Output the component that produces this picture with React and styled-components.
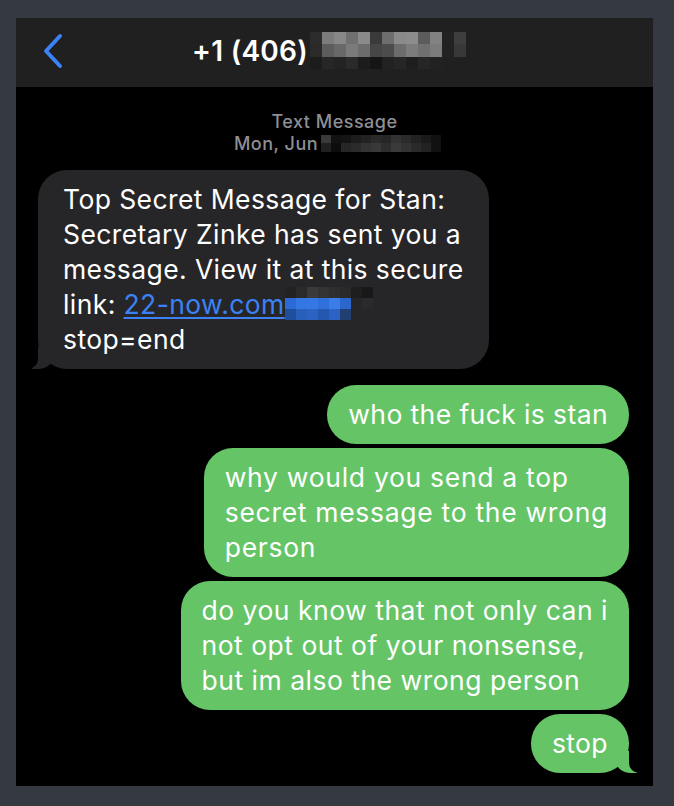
import React from "react";
import styled, { createGlobalStyle } from "styled-components";

const GlobalStyle = createGlobalStyle`
  html, body {
    margin: 0;
    padding: 0;
    background: #353942;
  }
  body {
    font-family: Inter, "Liberation Sans", Arial, sans-serif;
    -webkit-font-smoothing: antialiased;
  }
`;

const Page = styled.div`
  width: 674px;
  height: 806px;
  padding: 18px 21px 20px 16px;
  box-sizing: border-box;
`;

const Phone = styled.div`
  width: 637px;
  height: 768px;
  background: #000;
  display: flex;
  flex-direction: column;
  overflow: hidden;
`;

const Header = styled.div`
  height: 69px;
  flex-shrink: 0;
  background: #202020;
  display: flex;
  align-items: center;
  padding-left: 26px;
`;

const Back = styled.svg`
  width: 22px;
  height: 36px;
  display: block;
  margin-top: -4px;
`;

const TitleRow = styled.div`
  display: flex;
  align-items: center;
  margin-left: 128px;
  margin-top: -4px;
`;

const Title = styled.span`
  color: #fff;
  font-size: 28px;
  font-weight: 600;
  letter-spacing: 0.3px;
`;

const Mosaic = styled.span`
  display: inline-grid;
  grid-template-columns: repeat(${(p) => p.$cols}, ${(p) => p.$cw}px);
  grid-auto-rows: ${(p) => p.$rh}px;
  vertical-align: ${(p) => p.$va || "middle"};
  margin-left: ${(p) => p.$ml || 0}px;
`;

const Cell = styled.span`
  display: block;
`;

const Thread = styled.div`
  flex: 1;
  display: flex;
  flex-direction: column;
  padding: 23px 24px 0 22px;
`;

const Stamp = styled.div`
  display: flex;
  justify-content: center;
  align-items: center;
  height: 22px;
  color: #8e8e93;
  font-size: 18px;
  font-weight: 500;
  letter-spacing: 0.5px;
  margin-left: ${(p) => p.$ml || 2}px;
`;

const Bubble = styled.div`
  position: relative;
  align-self: ${(p) => (p.$me ? "flex-end" : "flex-start")};
  background: ${(p) => (p.$me ? "#65c466" : "#262628")};
  color: #fff;
  font-size: 26.5px;
  line-height: 35px;
  letter-spacing: ${(p) => p.$ls || 0.4}px;
  white-space: nowrap;
  padding: 12px ${(p) => (p.$me ? 21 : 25)}px;
  border-radius: 29px;
  margin-top: ${(p) => p.$mt || 4}px;

  ${(p) =>
    p.$tail &&
    (p.$me
      ? `
    &::before {
      content: "";
      position: absolute;
      bottom: 0;
      right: -8px;
      width: 22px;
      height: 22px;
      background: #65c466;
      border-bottom-left-radius: 16px 14px;
    }
    &::after {
      content: "";
      position: absolute;
      bottom: 0;
      right: -26px;
      width: 26px;
      height: 22px;
      background: #000;
      border-bottom-left-radius: 10px;
    }
  `
      : `
    &::before {
      content: "";
      position: absolute;
      bottom: 0;
      left: -6px;
      width: 22px;
      height: 22px;
      background: #262628;
      border-bottom-right-radius: 16px 14px;
    }
    &::after {
      content: "";
      position: absolute;
      bottom: 0;
      left: -26px;
      width: 26px;
      height: 22px;
      background: #000;
      border-bottom-right-radius: 10px;
    }
  `)}
`;

const Link = styled.span`
  color: #3b82f6;
  text-decoration: underline;
  text-decoration-thickness: 1.5px;
  text-underline-offset: 3px;
`;

function Pixels({ rows, cw, rh, ml, va }) {
  const cols = rows[0].length;
  return (
    <Mosaic $cols={cols} $cw={cw} $rh={rh} $ml={ml} $va={va}>
      {rows.flat().map((c, i) => (
        <Cell key={i} style={{ background: c }} />
      ))}
    </Mosaic>
  );
}

const phoneBlur = [
  ["#2c2c2c", "#7c7c7c", "#888", "#707070", "#8a8a8a", "#3a3a3a", "#6e6e6e", "#8a8a8a", "#8c8c8c", "#5c5c5c", "#828282", "#222", "#3e3e3e", "#202020"],
  ["#2a2a2a", "#5c5c5c", "#686868", "#7a7a7a", "#6c6c6c", "#464646", "#4c4c4c", "#6c6c6c", "#7c7c7c", "#707070", "#7c7c7c", "#222", "#383838", "#202020"],
  ["#1c1c1c", "#262626", "#232323", "#2a2a2a", "#1c1c1c", "#151515", "#222", "#262626", "#1e1e1e", "#262626", "#222", "#202020", "#202020", "#202020"],
];

const dateBlur = [
  ["#3a3a3a", "#111", "#141414", "#1c1c1c", "#222", "#2a2a2a", "#262626", "#333", "#2a2a2a", "#222", "#1a1a1a", "#111"],
  ["#202020", "#0c0c0c", "#262626", "#2a2a2a", "#333", "#383838", "#2e2e2e", "#3a3a3a", "#333", "#2a2a2a", "#222", "#111"],
];

const linkBlur = [
  ["#222", "#2a2a2a", "#3a3a3a", "#333", "#2e2e2e", "#2a2a2a", "#1e1e1e", "#181818", "#262628"],
  ["#2c6bd6", "#3476e2", "#3577e4", "#2f70dc", "#3a7de8", "#2a66cc", "#262628", "#2a2a2c", "#262628"],
  ["#1f4f9c", "#285fba", "#2a63c2", "#2457b0", "#2a63c4", "#213f70", "#262628", "#262628", "#262628"],
];

export default function App() {
  return (
    <Page>
      <GlobalStyle />
      <Phone>
        <Header>
          <Back viewBox="0 0 22 36">
            <path
              d="M18 3 L4 18 L18 33"
              fill="none"
              stroke="#3b82f6"
              strokeWidth="4"
              strokeLinecap="round"
              strokeLinejoin="round"
            />
          </Back>
          <TitleRow>
            <Title>+1 (406)</Title>
            <Pixels rows={phoneBlur} cw={12} rh={12.5} ml={2} />
          </TitleRow>
        </Header>

        <Thread>
          <Stamp>Text Message</Stamp>
          <Stamp $ml={8}>
            Mon, Jun
            <Pixels rows={dateBlur} cw={10} rh={8.5} ml={3} />
          </Stamp>

          <Bubble $tail $mt={16}>
            Top Secret Message for Stan:
            <br />
            Secretary Zinke has sent you a
            <br />
            message. View it at this secure
            <br />
            link: <Link>22-now.com</Link>
            <Pixels rows={linkBlur} cw={11} rh={11} va="top" />
            <br />
            stop=end
          </Bubble>

          <Bubble $me $mt={16}>who the fuck is stan</Bubble>
          <Bubble $me $ls={0.7}>
            why would you send a top
            <br />
            secret message to the wrong
            <br />
            person
          </Bubble>
          <Bubble $me $ls={0.5}>
            do you know that not only can i
            <br />
            not opt out of your nonsense,
            <br />
            but im also the wrong person
          </Bubble>
          <Bubble $me $tail>stop</Bubble>
        </Thread>
      </Phone>
    </Page>
  );
}
